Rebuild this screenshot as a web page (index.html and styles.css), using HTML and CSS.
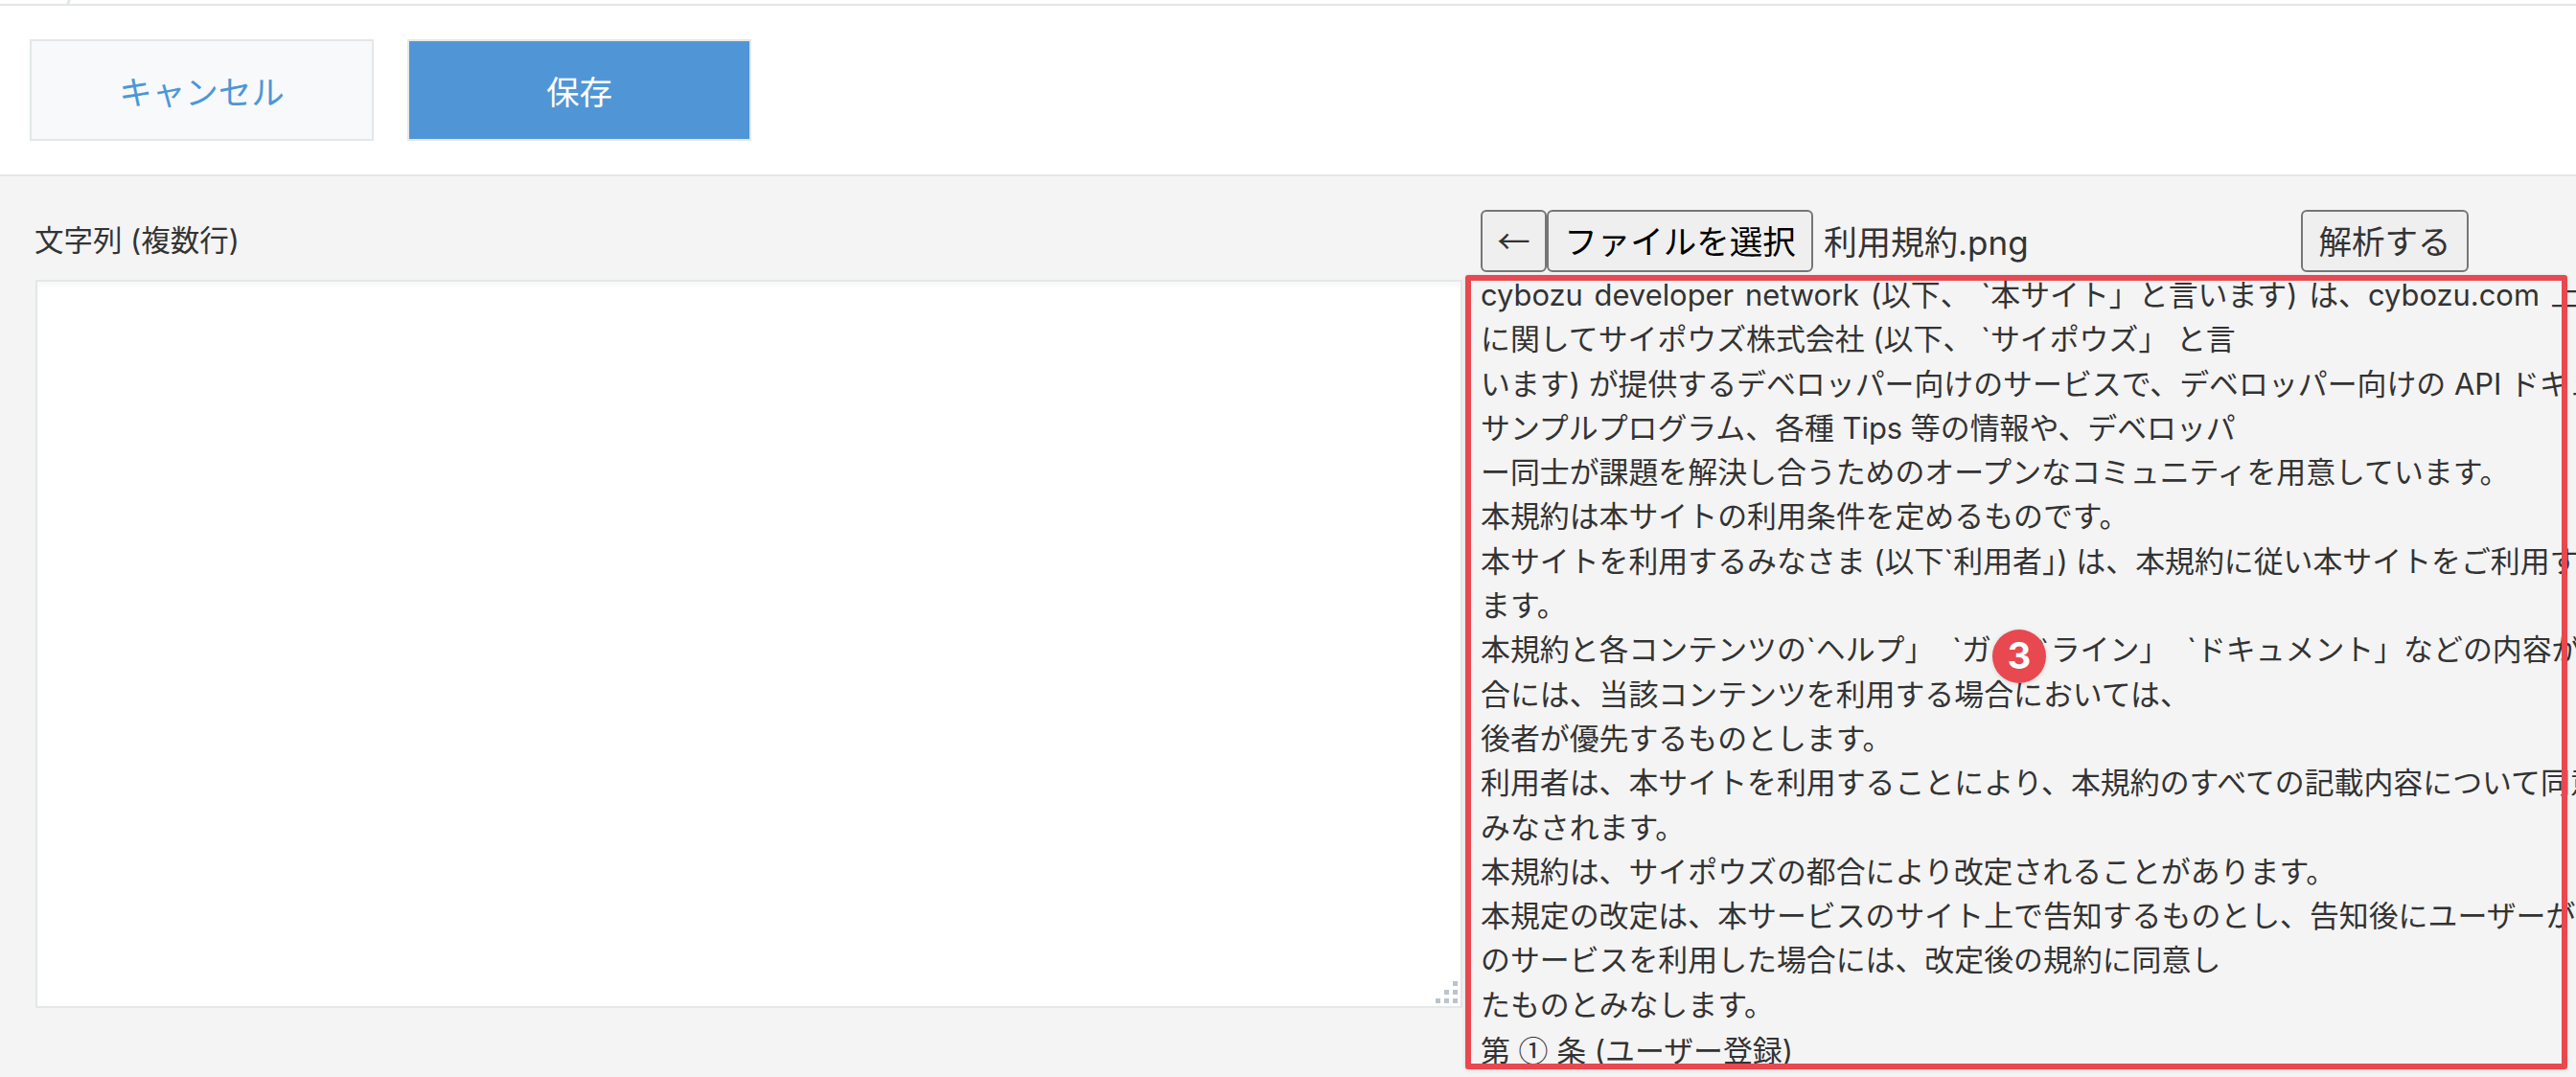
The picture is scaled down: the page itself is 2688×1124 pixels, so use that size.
FILE: index.html
```html
<!DOCTYPE html>
<html lang="ja">
<head>
    <meta charset="UTF-8">
    <meta name="viewport" content="width=device-width, initial-scale=1.0">
    <title>文字列 (複数行)</title>
    <link rel="stylesheet" href="styles.css">
</head>
<body>

<div class="topbar"><span class="tab-edge"></span></div>

<div class="toolbar">
    <button class="action cancel">キャンセル</button>
    <button class="action save">保存</button>
</div>

<div class="content">
    <div class="field">
        <label class="field-label">文字列 (複数行)</label>
        <div class="textarea">
            <svg class="grip" width="24" height="24" viewBox="0 0 24 24">
                <rect x="18" y="0" width="5" height="5"></rect>
                <rect x="9" y="9" width="5" height="5"></rect>
                <rect x="18" y="9" width="5" height="5"></rect>
                <rect x="0" y="18" width="5" height="5"></rect>
                <rect x="9" y="18" width="5" height="5"></rect>
                <rect x="18" y="18" width="5" height="5"></rect>
            </svg>
        </div>
    </div>

    <div class="ocr">
        <div class="ocr-controls">
            <button class="native back">←</button>
            <button class="native file-btn">ファイルを選択</button>
            <span class="file-name">利用規約.png</span>
            <button class="native analyze">解析する</button>
        </div>
        <div class="ocr-result">
            <div class="spaced">cybozu developer network (以下、 `本サイト」と言います) は、cybozu.com 上のアプリケーション開発</div>
            <div>に関してサイポウズ株式会社 (以下、 `サイポウズ」 と言</div>
            <div>います) が提供するデベロッパー向けのサービスで、デベロッパー向けの API ドキュメント、</div>
            <div>サンプルプログラム、各種 Tips 等の情報や、デベロッパ</div>
            <div>ー同士が課題を解決し合うためのオープンなコミュニティを用意しています。</div>
            <div>本規約は本サイトの利用条件を定めるものです。</div>
            <div>本サイトを利用するみなさま (以下`利用者」) は、本規約に従い本サイトをご利用することができ</div>
            <div>ます。</div>
            <div class="spaced-wide">本規約と各コンテンツの`ヘルプ」 `ガイドライン」 `ドキュメント」などの内容が異なる場</div>
            <div>合には、当該コンテンツを利用する場合においては、</div>
            <div>後者が優先するものとします。</div>
            <div>利用者は、本サイトを利用することにより、本規約のすべての記載内容について同意したものと</div>
            <div>みなされます。</div>
            <div>本規約は、サイポウズの都合により改定されることがあります。</div>
            <div>本規定の改定は、本サービスのサイト上で告知するものとし、告知後にユーザーが本</div>
            <div>のサービスを利用した場合には、改定後の規約に同意し</div>
            <div>たものとみなします。</div>
            <div>第 <span class="circled">①</span> 条 (ユーザー登録)</div>
            <div>ユーザー登録を希望する方は、</div>
        </div>
    </div>
</div>

<div class="highlight"></div>
<div class="badge">3</div>

</body>
</html>
```

FILE: styles.css
```css
html, body {
    height: 100%;
    overflow: hidden;
}

body {
    font-family: Inter, "Noto Sans CJK JP", sans-serif;
    color: #333;
    background-color: #f4f4f4;
    margin: 0;
    padding: 0;
}

.topbar {
    position: relative;
    height: 4px;
    background-color: #fff;
    border-bottom: 2px solid #e3e7e8;
}

.tab-edge {
    position: absolute;
    left: 70px;
    top: 0;
    width: 3px;
    height: 4px;
    background-color: #e3e7e8;
    transform: skewX(-20deg);
}

.toolbar {
    display: flex;
    gap: 35px;
    height: 106px;
    padding: 35px 31px;
    background-color: #fff;
    border-bottom: 2px solid #e3e7e8;
}

.action {
    width: 359px;
    height: 106px;
    font-family: inherit;
    font-size: 34.5px;
    border: 2px solid #e3e7e8;
    cursor: pointer;
}

.cancel {
    background-color: #f7f9fa;
    color: #4b97d6;
}

.save {
    background-color: #5096d6;
    color: #fff;
}

.content {
    display: flex;
    gap: 19px;
}

.field {
    width: 1489px;
    margin-left: 37px;
    flex-shrink: 0;
}

.field-label {
    display: block;
    height: 108px;
    line-height: 134px;
    font-size: 30.5px;
    margin-left: -1px;
}

.textarea {
    position: relative;
    box-sizing: border-box;
    height: 760px;
    background-color: #fff;
    border: 2px solid #e3e7e8;
    box-shadow: inset 0 4px 6px rgba(0, 0, 0, 0.03);
}

.grip {
    position: absolute;
    right: 2px;
    bottom: 2px;
    fill: #b9c4cc;
}

.ocr {
    flex-shrink: 0;
    white-space: nowrap;
}

.ocr-controls {
    display: flex;
    align-items: center;
    height: 65px;
    margin-top: 35px;
}

.native {
    height: 65px;
    padding: 0 0 4px;
    font-family: inherit;
    font-size: 34.5px;
    color: #333;
    background-color: #efefef;
    border: 2px solid #767676;
    border-radius: 6px;
}

.back {
    width: 69px;
    font-family: "Noto Sans CJK JP", sans-serif;
}

.file-btn {
    color: #000;
    width: 278px;
}

.file-name {
    box-sizing: border-box;
    width: 509px;
    padding: 0 0 2px 11px;
    font-size: 35px;
}

.analyze {
    width: 175px;
}

.ocr-result {
    margin-top: 1px;
    font-size: 30.9px;
    line-height: 46.3px;
}

.spaced {
    word-spacing: 3px;
}

.spaced-wide {
    word-spacing: 10px;
}

.circled {
    font-family: "Noto Sans CJK JP", sans-serif;
}

.highlight {
    position: absolute;
    left: 1529px;
    top: 287px;
    width: 1150px;
    height: 829px;
    box-sizing: border-box;
    border: 6px solid #e8484f;
    border-radius: 3px;
    box-shadow: 0 1px 4px rgba(0, 0, 0, 0.12);
}

.badge {
    position: absolute;
    left: 2079px;
    top: 657px;
    width: 56px;
    height: 56px;
    line-height: 54px;
    text-align: center;
    border-radius: 50%;
    font-size: 38px;
    font-weight: bold;
    color: #fff;
    background-color: #e8484f;
    box-shadow: 0 1px 4px rgba(0, 0, 0, 0.15);
}
```
